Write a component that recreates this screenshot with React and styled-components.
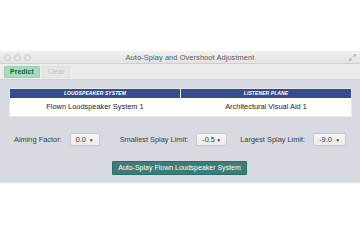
import styled, { createGlobalStyle } from "styled-components";

const GlobalStyle = createGlobalStyle`
  body {
    margin: 0;
    background: #ffffff;
    font-family: "Liberation Sans", Arial, sans-serif;
  }
`;

const Page = styled.div`
  width: 360px;
  height: 240px;
  padding-top: 51px;
  box-sizing: border-box;
`;

const Window = styled.div`
  width: 360px;
  display: flex;
  flex-direction: column;
  background: #d7dae1;
  box-shadow: 0 1px 2px rgba(0, 0, 0, 0.15);
`;

const TitleBar = styled.div`
  height: 12px;
  display: flex;
  align-items: center;
  padding: 0 4px;
  background: linear-gradient(#f1f1f1, #e3e3e3);
  border-bottom: 1px solid #d0d0d0;
`;

const Lights = styled.div`
  display: flex;
  gap: 3px;
`;

const Light = styled.span`
  width: 5px;
  height: 5px;
  border-radius: 50%;
  border: 1px solid #c4c4c4;
  background: #e9e9e9;
`;

const Title = styled.div`
  flex: 1;
  text-align: center;
  font-size: 7.4px;
  color: #5a5a5a;
  letter-spacing: 0.1px;
`;

const Resize = styled.svg`
  width: 7px;
  height: 7px;
`;

const Toolbar = styled.div`
  height: 15px;
  display: flex;
  align-items: center;
  gap: 2px;
  padding: 0 4px;
  background: #ececec;
  border-bottom: 1px solid #d3d3d3;
`;

const ToolButton = styled.button`
  height: 12px;
  padding: 0 5px;
  border: 1px solid ${(p) => (p.$active ? "#9fd2b0" : "#e0e0e0")};
  border-radius: 1px;
  background: ${(p) => (p.$active ? "#a5dcbc" : "#e6e6e6")};
  color: ${(p) => (p.$active ? "#2d5c3d" : "#c2c2c2")};
  font-family: "Liberation Sans", Arial, sans-serif;
  font-size: 7px;
  font-weight: ${(p) => (p.$active ? 700 : 400)};
  line-height: 10px;
`;

const Content = styled.div`
  display: flex;
  flex-direction: column;
  padding: 8px 8px 7px 9px;
`;

const Table = styled.div`
  display: grid;
  grid-template-columns: 1fr 1fr;
  column-gap: 1px;
  background: #ffffff;
  border: 1px solid #e4e6ea;
`;

const HeadCell = styled.div`
  height: 9px;
  background: #374b8f;
  color: #ffffff;
  font-size: 5px;
  font-weight: 700;
  font-style: italic;
  text-align: center;
  line-height: 9px;
  letter-spacing: 0.1px;
`;

const BodyCell = styled.div`
  height: 18px;
  line-height: 18px;
  font-size: 7.4px;
  color: #222222;
  text-align: center;
`;

const Controls = styled.div`
  display: flex;
  align-items: center;
  margin-top: 16px;
  padding-left: 5px;
`;

const Group = styled.div`
  display: flex;
  align-items: center;
  gap: 8px;
  margin-left: ${(p) => p.$space || 0}px;
`;

const Label = styled.span`
  font-size: 7.4px;
  color: #3c3c3c;
`;

const Select = styled.div`
  height: 13px;
  width: ${(p) => p.$w}px;
  box-sizing: border-box;
  display: flex;
  align-items: center;
  justify-content: space-between;
  padding: 0 5px;
  border: 1px solid #c6c8cc;
  border-radius: 2px;
  background: linear-gradient(#f7f7f7, #ebebeb);
  font-size: 7.4px;
  color: #333333;
`;

const Caret = styled.span`
  font-size: 5px;
  color: #444444;
`;

const ButtonRow = styled.div`
  display: flex;
  justify-content: center;
  margin-top: 15px;
  padding-right: 2px;
`;

const ActionButton = styled.button`
  height: 14px;
  padding: 0 5px;
  border: 1px solid #2f6b66;
  border-radius: 1px;
  background: #3d7c77;
  color: #ffffff;
  font-family: "Liberation Sans", Arial, sans-serif;
  font-size: 7px;
  line-height: 12px;
`;

export default function App() {
  return (
    <>
      <GlobalStyle />
      <Page>
        <Window>
          <TitleBar>
            <Lights>
              <Light />
              <Light />
              <Light />
            </Lights>
            <Title>Auto-Splay and Overshoot Adjustment</Title>
            <Resize viewBox="0 0 7 7">
              <path d="M4 0h3v3M7 0L4 3M3 7H0V4M0 7l3-3" stroke="#a8a8a8" strokeWidth="1" fill="none" />
            </Resize>
          </TitleBar>
          <Toolbar>
            <ToolButton $active>Predict</ToolButton>
            <ToolButton>Clear</ToolButton>
          </Toolbar>
          <Content>
            <Table>
              <HeadCell>LOUDSPEAKER SYSTEM</HeadCell>
              <HeadCell>LISTENER PLANE</HeadCell>
              <BodyCell>Flown Loudspeaker System 1</BodyCell>
              <BodyCell>Architectural Visual Aid 1</BodyCell>
            </Table>
            <Controls>
              <Group>
                <Label>Aiming Factor:</Label>
                <Select $w={30}>0.0<Caret>▼</Caret></Select>
              </Group>
              <Group $space={20}>
                <Label>Smallest Splay Limit:</Label>
                <Select $w={31}>-0.5<Caret>▼</Caret></Select>
              </Group>
              <Group $space={13}>
                <Label>Largest Splay Limit:</Label>
                <Select $w={33}>-9.0<Caret>▼</Caret></Select>
              </Group>
            </Controls>
            <ButtonRow>
              <ActionButton>Auto-Splay Flown Loudspeaker System</ActionButton>
            </ButtonRow>
          </Content>
        </Window>
      </Page>
    </>
  );
}
